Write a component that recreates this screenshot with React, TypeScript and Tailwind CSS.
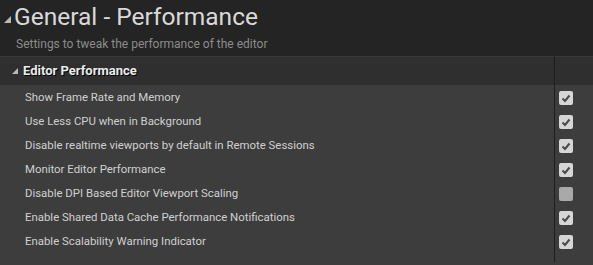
const ROWS = [
  { label: 'Show Frame Rate and Memory', on: true },
  { label: 'Use Less CPU when in Background', on: true },
  { label: 'Disable realtime viewports by default in Remote Sessions', on: true },
  { label: 'Monitor Editor Performance', on: true },
  { label: 'Disable DPI Based Editor Viewport Scaling', on: false },
  { label: 'Enable Shared Data Cache Performance Notifications', on: true },
  { label: 'Enable Scalability Warning Indicator', on: true },
]

function Tri({ size }: { size: number }) {
  return (
    <svg width={size} height={size} viewBox="0 0 10 10" className="shrink-0">
      <path d="M10 0 L10 10 L0 10 Z" fill="#b8b8b8" />
    </svg>
  )
}

function Check({ on }: { on: boolean }) {
  return (
    <div className={`flex h-[14px] w-[14px] items-center justify-center rounded-[2px] ${on ? 'bg-[#d6d6d6]' : 'bg-[#a9a9a9]'}`}>
      {on && (
        <svg width="10" height="10" viewBox="0 0 10 10">
          <path d="M1.5 5.5 L4 8 L8.5 2.5" stroke="#4a4a4a" strokeWidth="2" fill="none" />
        </svg>
      )}
    </div>
  )
}

export default function App() {
  return (
    <div className="flex h-[265px] w-[593px] flex-col overflow-hidden bg-[#3d3d3d] font-['Roboto',sans-serif]">
      {/* Page header */}
      <div className="h-[56px] bg-[#242424] pl-[4px]">
        <div className="flex items-center gap-[3px] pt-[3px]">
          <div className="mt-[4px]"><Tri size={7} /></div>
          <h1 className="text-[24.5px] leading-[28px] text-[#d9d9d9]">General - Performance</h1>
        </div>
        <p className="mt-[6px] pl-[12px] text-[12px] leading-[14px] text-[#8c8c8c]">Settings to tweak the performance of the editor</p>
      </div>

      <div className="flex flex-1 pb-[3px]">
        <div className="flex-1 border-r border-[#1e1e1e]">
          <div className="flex h-[29px] items-center gap-[5px] border-t border-[#383838] bg-[#2f2f2f] pl-[12px]">
            <Tri size={6} />
            <span className="text-[13px] font-bold text-[#ececec] [text-shadow:1px_1px_0_#000]">Editor Performance</span>
          </div>
          {ROWS.map((r) => (
            <div key={r.label} className="flex h-[24px] items-center pl-[25px] pt-[1px] text-[11.4px] text-[#d0d0d0]">
              {r.label}
            </div>
          ))}
        </div>
        <div className="w-[38px]">
          <div className="h-[29px] border-t border-[#383838] bg-[#2f2f2f]" />
          {ROWS.map((r) => (
            <div key={r.label} className="flex h-[24px] items-center pl-[4px] pt-[1px]">
              <Check on={r.on} />
            </div>
          ))}
        </div>
      </div>
    </div>
  )
}
